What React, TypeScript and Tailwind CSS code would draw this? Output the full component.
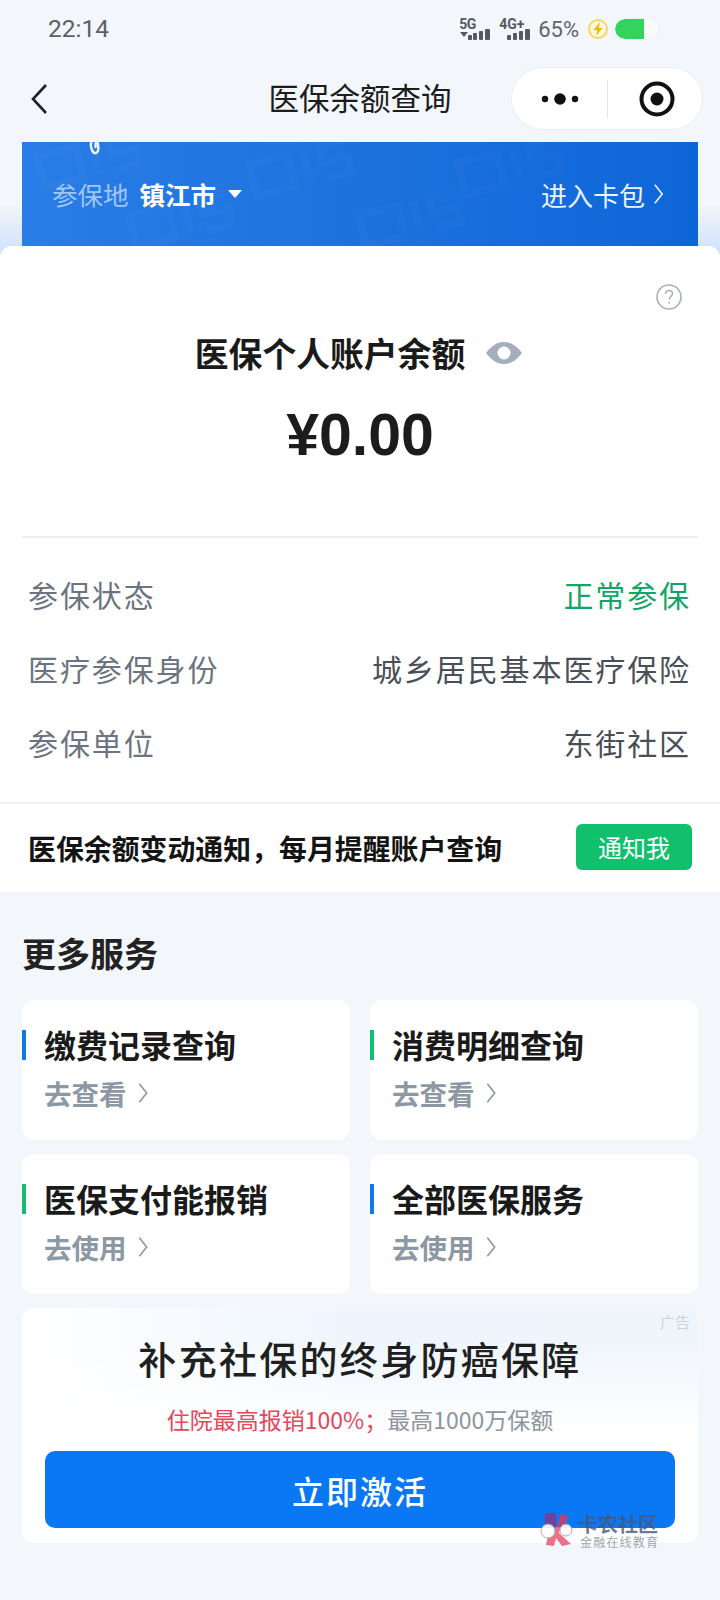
import React from 'react';

const Chevron = ({ className }: { className: string }) => (
  <svg viewBox="0 0 12 24" fill="none" className={className}>
    <path d="M2 2 L10 12 L2 22" stroke="currentColor" strokeWidth="1.8" />
  </svg>
);

const Signal = ({ label, small }: { label: string; small?: boolean }) => (
  <div className="relative w-[32px] h-[24px] text-[#555a61]">
    <span className={`absolute left-0 top-[0px] font-['Roboto',sans-serif] font-bold text-[14px] leading-[14px] ${small ? 'tracking-[-0.5px]' : ''}`}>{label}</span>
    <svg viewBox="0 0 32 24" className="absolute inset-0 w-[32px] h-[24px]" fill="currentColor">
      {small && <path d="M1 15 h8 l-4 5 z" />}
      <rect x={small ? 9 : 8} y="18" width="4" height="5" rx="1" />
      <rect x="14" y="16" width="4" height="7" rx="1" />
      <rect x="20" y="14" width="4" height="9" rx="1" />
      <rect x="26" y="12" width="5" height="11" rx="1" />
    </svg>
  </div>
);

const ServiceCard = ({ title, action, bar }: { title: string; action: string; bar: 'blue' | 'green' }) => (
  <div className="h-[140px] bg-white rounded-[12px] pt-[30px]">
    <div className="flex items-center h-[30px]">
      <div className={`w-[4px] h-[30px] ${bar === 'blue' ? 'bg-[#0f7ae5]' : 'bg-[#12bf70]'}`}></div>
      <span className="ml-[18px] -mt-[2px] text-[32px] leading-[30px] font-bold text-[#1a1a1a]">{title}</span>
    </div>
    <div className="flex items-center h-[36px] mt-[15px] ml-[22px] text-[#8d98a5]">
      <span className="text-[27.5px] leading-[36px] font-bold">{action}</span>
      <Chevron className="w-[12px] h-[22px] ml-[10px]" />
    </div>
  </div>
);

const InfoRow = ({ label, value, green }: { label: string; value: string; green?: boolean }) => (
  <div className="h-[74px] flex items-center justify-between pl-[28px] pr-[29px] text-[30px] tracking-[1.9px]">
    <span className="text-[#6b7480]">{label}</span>
    <span className={green ? 'text-[#12a566]' : 'text-[#4a4f57]'}>{value}</span>
  </div>
);

const BannerPattern = () => (
  <svg viewBox="0 0 676 104" fill="none" className="absolute inset-0 w-[676px] h-[104px]" stroke="#fff" strokeOpacity="0.018" strokeWidth="8">
    <g transform="rotate(-14 60 30)">
      <rect x="20" y="4" width="40" height="32" />
      <path d="M76 4 V36 M92 36 H118 V20 H92 V4 H118" />
    </g>
    <g transform="rotate(-14 280 30)">
      <rect x="230" y="10" width="40" height="32" />
      <path d="M286 10 V42 M302 42 H328 V26 H302 V10 H328" />
    </g>
    <g transform="rotate(-14 500 30)">
      <rect x="440" y="6" width="40" height="32" />
      <path d="M496 6 V38 M512 38 H538 V22 H512 V6 H538" />
    </g>
    <g transform="rotate(-14 160 80)">
      <rect x="110" y="62" width="40" height="32" />
      <path d="M166 62 V94 M182 94 H208 V78 H182 V62 H208" />
    </g>
    <g transform="rotate(-14 400 80)">
      <rect x="340" y="58" width="40" height="32" />
      <path d="M396 58 V90 M412 90 H438 V74 H412 V58 H438" />
    </g>
  </svg>
);

export default function App() {
  return (
    <div className="relative w-[720px] h-[1600px] overflow-hidden bg-[#f3f6fb] font-['Noto_Sans_CJK_SC','Noto_Sans',sans-serif]">
      {/* glow behind the sheet */}
      <div className="absolute left-0 right-0 top-[205px] h-[50px] bg-gradient-to-b from-[#f3f6fb] to-[#cfe0fa]"></div>

      <div className="relative flex flex-col">
        {/* status bar */}
        <div className="h-[58px] flex items-center pl-[48px]">
          <span className="mt-[1px] font-['Roboto',sans-serif] text-[24.5px] text-[#5b5f66]">22:14</span>
          <div className="ml-auto mr-[60px] flex items-center">
            <Signal label="5G" small />
            <div className="ml-[8px]"><Signal label="4G+" /></div>
            <span className="ml-[7px] font-['Roboto',sans-serif] text-[22px] text-[#5f646b]">65%</span>
            <svg viewBox="0 0 22 22" className="ml-[8px] w-[22px] h-[22px]">
              <circle cx="11" cy="11" r="9" fill="#fff8dd" stroke="#f6d860" strokeWidth="2" />
              <path d="M13 4 L6.5 12 H10.5 L9 18 L15.5 10 H11.5 Z" fill="#f2b600" />
            </svg>
            <div className="ml-[5px] w-[46px] h-[22px] rounded-full bg-[#f8fafc] border border-[#eef1f4] overflow-hidden">
              <div className="w-[29px] h-full bg-[#34d35c] rounded-l-full"></div>
            </div>
          </div>
        </div>

        {/* nav bar */}
        <div className="h-[84px] flex items-start pt-[9px] pl-[30px] pr-[17px]">
          <svg viewBox="0 0 18 32" fill="none" className="mt-[16px] w-[18px] h-[32px] text-[#222]">
            <path d="M16 2 L3 16 L16 30" stroke="currentColor" strokeWidth="2.6" />
          </svg>
          <span className="flex-1 text-center mt-[8px] pl-[161px] text-[30.5px] leading-[44px] text-[#1c1c1c]">医保余额查询</span>
          <div className="w-[192px] h-[63px] flex items-center bg-white border border-[#e9edf2] rounded-full">
            <div className="w-[95px] flex justify-center">
              <svg viewBox="0 0 40 14" className="w-[40px] h-[14px] fill-[#111]">
                <circle cx="5" cy="7" r="3.2" />
                <circle cx="20" cy="7" r="5.8" />
                <circle cx="35" cy="7" r="3.2" />
              </svg>
            </div>
            <div className="w-px h-[38px] bg-[#e4e6ea]"></div>
            <div className="flex-1 flex justify-center pl-[3px]">
              <svg viewBox="0 0 36 36" className="w-[36px] h-[36px]">
                <circle cx="18" cy="18" r="15.5" fill="none" stroke="#111" strokeWidth="4" />
                <circle cx="18" cy="18" r="6.5" fill="#111" />
              </svg>
            </div>
          </div>
        </div>

        {/* card banner */}
        <div className="relative mx-[22px] h-[104px] flex items-start justify-between overflow-hidden bg-gradient-to-r from-[#2a7de6] to-[#0d66d8] pl-[30px] pr-[34px] pt-[29px]">
          <BannerPattern />
          <svg viewBox="0 0 16 16" fill="none" className="absolute left-[66px] top-[-2px] w-[16px] h-[16px]">
            <path d="M4 0 C1 7 5 14 8 13 C11 12 11 6 9 1 C7 4 7 6 8 8" stroke="#eef5ff" strokeWidth="2.4" />
          </svg>
          <div className="relative flex items-center h-[46px]">
            <span className="text-[25.5px] text-[#9fc6f7]">参保地</span>
            <span className="ml-[11px] text-[25.5px] font-bold text-white">镇江市</span>
            <svg viewBox="0 0 14 8" className="ml-[12px] w-[14px] h-[8px] fill-white">
              <path d="M0 0 H14 L7 8 Z" />
            </svg>
          </div>
          <div className="relative flex items-center h-[46px] text-[#eaf3ff]">
            <span className="text-[26px]">进入卡包</span>
            <Chevron className="ml-[8px] w-[11px] h-[22px]" />
          </div>
        </div>

        {/* balance sheet */}
        <div className="bg-white rounded-t-[12px]">
          <div className="flex justify-end pt-[38px] pr-[38px]">
            <svg viewBox="0 0 26 26" fill="none" className="w-[26px] h-[26px] text-[#a7afba]">
              <circle cx="13" cy="13" r="12" stroke="currentColor" strokeWidth="1.6" />
              <path d="M9.5 10 C9.5 7.8 11 6.6 13 6.6 C15 6.6 16.5 7.9 16.5 9.8 C16.5 12 13.2 12.6 13.2 15.5" stroke="currentColor" strokeWidth="1.5" />
              <circle cx="13.2" cy="18.8" r="1" fill="currentColor" />
            </svg>
          </div>
          <div className="mt-[21px] h-[44px] flex items-center justify-center pr-[3px]">
            <span className="text-[33.8px] leading-[44px] font-bold text-[#1a1a1a]">医保个人账户余额</span>
            <svg viewBox="0 0 36 22" className="ml-[21px] w-[36px] h-[22px]">
              <path d="M0 11 C6 3 12 0 18 0 C24 0 30 3 36 11 C30 19 24 22 18 22 C12 22 6 19 0 11 Z" fill="#a4aebc" />
              <circle cx="18" cy="11" r="6.5" fill="#fff" />
            </svg>
          </div>
          <div className="mt-[25px] h-[70px] text-center font-['Liberation_Sans',sans-serif] font-bold text-[59px] leading-[70px] text-[#1c1c1c]">¥0.00</div>
          <div className="mx-[22px] mt-[66px] h-[2px] bg-[#eef0f2]"></div>

          <div className="pt-[19px]">
            <InfoRow label="参保状态" value="正常参保" green />
            <InfoRow label="医疗参保身份" value="城乡居民基本医疗保险" />
            <InfoRow label="参保单位" value="东街社区" />
          </div>

          <div className="mt-[23px] h-[2px] bg-[#f1f2f4]"></div>
          <div className="h-[88px] flex items-center justify-between pl-[28px] pr-[28px]">
            <span className="mt-[1px] text-[27.9px] font-bold text-[#141414]">医保余额变动通知，每月提醒账户查询</span>
            <div className="mb-[2px] w-[116px] h-[46px] flex items-center justify-center rounded-[6px] bg-[#10c06d] text-[24px] text-white">通知我</div>
          </div>
        </div>

        {/* more services */}
        <div className="px-[22px]">
          <div className="pt-[37px] text-[34px] leading-[48px] font-bold text-[#222]">更多服务</div>
          <div className="mt-[23px] grid grid-cols-2 gap-x-[20px] gap-y-[14px]">
            <ServiceCard title="缴费记录查询" action="去查看" bar="blue" />
            <ServiceCard title="消费明细查询" action="去查看" bar="green" />
            <ServiceCard title="医保支付能报销" action="去使用" bar="green" />
            <ServiceCard title="全部医保服务" action="去使用" bar="blue" />
          </div>

          {/* ad */}
          <div className="relative mt-[14px] h-[235px] rounded-[12px] bg-white px-[23px] overflow-hidden">
            <div className="absolute inset-x-0 top-0 h-[130px] bg-gradient-to-r from-white via-[#eef5fd] to-[#f0f5fb]"></div>
            <div className="absolute inset-x-0 top-[30px] h-[100px] bg-gradient-to-b from-transparent to-white"></div>
            <span className="absolute right-[8px] top-[4px] text-[15px] leading-[20px] text-[#ccd2d9]">广告</span>
            <div className="relative pt-[24px] text-center text-[38px] leading-[52px] tracking-[2.3px] font-medium text-[#202020]">补充社保的终身防癌保障</div>
            <div className="relative mt-[19px] h-[32px] flex items-center justify-center text-[23px] leading-[32px]">
              <span className="text-[#e8455a]">住院最高报销100%；</span>
              <span className="text-[#8f959d]">最高1000万保额</span>
            </div>
            <div className="relative mt-[16px] h-[77px] flex items-center justify-center rounded-[10px] bg-[#0a78f5] text-[32px] tracking-[2px] font-medium text-white">立即激活</div>
          </div>
        </div>
      </div>

      {/* forum watermark */}
      <div className="absolute left-[540px] top-[1513px] flex items-start opacity-90">
        <svg viewBox="0 0 34 33" className="w-[34px] h-[33px]">
          <path d="M5 0 H16 V14 L5 14 Z" fill="#7b3c8f" />
          <path d="M20 1 L29 3 L24 14 L17 14 Z" fill="#c0406f" />
          <path d="M10 14 L21 14 L19 20 L31 31 L22 33 L16 25 L14 33 L6 32 Z" fill="#e8627c" />
          <circle cx="8" cy="18" r="7" fill="#fff" stroke="#a7a0a6" strokeWidth="1" />
          <circle cx="26" cy="17" r="6" fill="#fff" stroke="#a7a0a6" strokeWidth="1" />
        </svg>
        <div className="ml-[4px] flex flex-col">
          <span className="text-[20px] leading-[22px] font-bold text-[#45587a]/90">卡农社区</span>
          <span className="ml-[2px] text-[12px] leading-[14px] tracking-[1.2px] text-[#9aa0a8]">金融在线教育</span>
        </div>
      </div>
    </div>
  );
}
